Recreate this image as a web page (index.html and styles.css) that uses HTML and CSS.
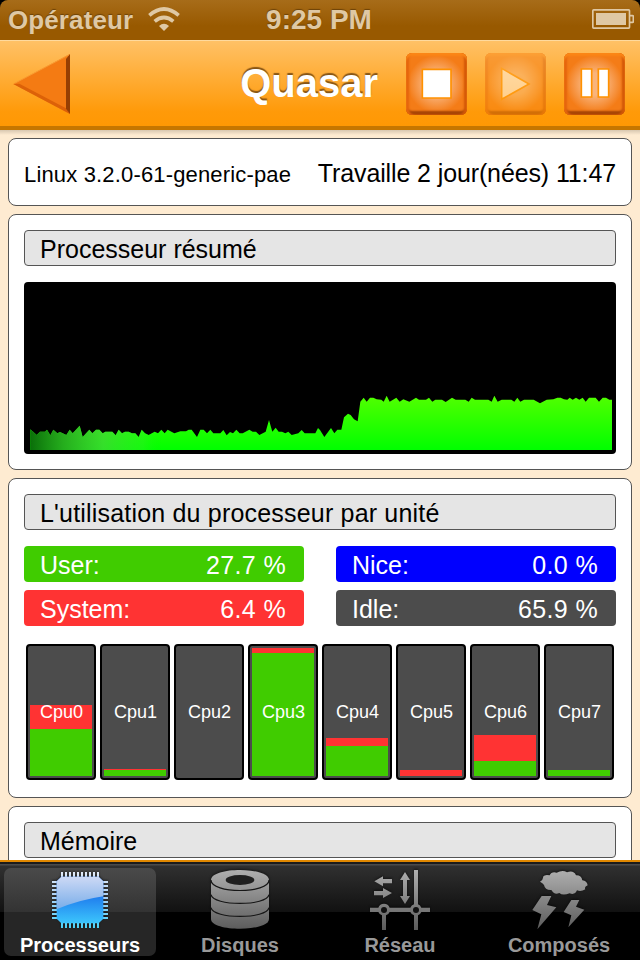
FILE: index.html
```html
<!DOCTYPE html>
<html lang="fr">
<head>
<meta charset="utf-8">
<title>Quasar</title>
<link rel="stylesheet" href="styles.css">
</head>
<body>
<div class="screen">
  <header class="status">
    <div class="carrier"><span>Opérateur</span>
      <svg class="wifi" viewBox="0 0 96 72"><g fill="none" stroke="#dfc8a4" stroke-width="11"><path d="M4 25Q48-13 92 25"/><path d="M20 43Q48 20 76 43"/></g><path fill="#dfc8a4" d="M33 57Q48 43 63 57L48 72Z"/></svg>
    </div>
    <span class="clock">9:25 PM</span>
    <svg class="battery" viewBox="0 0 126 60"><path d="M2.500 5q0-2.500 2.500-2.500h105q2.500 0 2.500 2.500v15h9q2.500 0 2.500 2.500v15q0 2.500-2.500 2.500h-9v15q0 2.500-2.500 2.500h-105q-2.500 0-2.500-2.500zM112.500 20v20" fill="none" stroke="#dfc8a4" stroke-width="5"/><path fill="#dfc8a4" d="M12 12h90v36H12z"/></svg>
  </header>
  <nav class="navbar">
    <svg class="back" viewBox="0 0 180 186">
      <path fill="#f47b13" d="M4 93 174 3V183Z"/><path fill="#dc6108" d="M4 93 174 183 162 166 22 92Z"/><path fill="#963f03" d="M174 3V183L162 167V18Z"/><path d="M8 91 172 5" stroke="#f99a31" stroke-width="3"/>
    </svg>
    <h1>Quasar</h1>
    <div class="controls">
      <div class="btn"><svg viewBox="0 0 183 186"><path d="M49 49h86v86H49z" fill="#fff" stroke="#ff9100" stroke-width="5"/></svg></div>
      <div class="btn off"><svg viewBox="0 0 183 186"><path d="M50 46V139L132 93Z" fill="#fff" stroke="#ff9100" stroke-width="5"/></svg></div>
      <div class="btn"><svg viewBox="0 0 183 186"><path d="M52 48h31v84H52zM103 48h31v84h-31z" fill="#fff" stroke="#ff9100" stroke-width="5"/></svg></div>
    </div>
  </nav>
  <main>
    <section class="card info"><span class="kernel">Linux 3.2.0-61-generic-pae</span><span class="uptime">Travaille 2 jour(nées) 11:47</span></section>
    <section class="card">
      <h2>Processeur résumé</h2>
      <svg class="chart" viewBox="72 -294 1776 516">
        <defs>
          <linearGradient id="load" gradientUnits="userSpaceOnUse" x1="0" y1="50" x2="0" y2="210"><stop stop-color="#50ff00"/><stop offset="1" stop-color="#0f0"/></linearGradient>
          <linearGradient id="fade" gradientUnits="userSpaceOnUse" x1="90" y1="0" x2="490" y2="0"><stop stop-color="#0a650a" stop-opacity=".94"/><stop offset=".25" stop-color="#2a9f22" stop-opacity=".85"/><stop offset=".55" stop-color="#48d13c" stop-opacity=".7"/><stop offset=".85" stop-color="#30ee25" stop-opacity=".45"/><stop offset="1" stop-color="#0f0" stop-opacity="0"/></linearGradient>
          <path id="past" d="M91 210V148L110 165 120 155 135 155 141 149 151 166 160 149 172 160 180 156 199 165 209 149 218 160 239 137 248 171 268 149 277 160 288 149 298 149 308 160 316 155 337 155 347 166 356 149 366 160 375 155 386 155 396 160 406 160 416 171 425 149 435 160 446 165 464 155 474 160 484 149 494 160 503 149 523 160 541 154 558 154 566 149 575 149 591 171 601 149 611 149 621 160 631 149 640 160 661 160 670 150 680 166 690 156 699 160 709 149 719 160 728 160 748 149 758 155 768 155 778 165 797 155 807 120 817 155 827 143 836 155 846 155 856 160 865 155 875 165 895 160 905 150 914 160 946 160 954 144 960 150V210Z"/>
        </defs>
        <use href="#past" fill="url(#load)"/><use href="#past" fill="url(#fade)"/>
        <path transform="translate(960)" fill="url(#load)" d="M0 210V150L13 171 33 144 43 160 52 149 64 149 72 112 84 101 92 105 102 118 113 124 121 65 131 53 140 65 150 53 160 53 170 58 184 59 191 65 200 47 209 65 229 53 239 65 250 58 268 65 288 53 297 59 318 59 327 53 337 65 346 59 366 59 377 66 396 53 407 59 436 59 446 65 455 53 465 59 505 59 515 65 523 47 533 65 545 59 574 59 583 65 592 53 601 65 612 59 641 59 660 70 680 59 700 58 712 53 722 53 732 58 742 59 749 53 758 59 768 53 778 59 788 53 797 65 807 53 827 53 837 65 848 53 858 53 868 59 876 59V210Z"/>
      </svg>
    </section>
    <section class="card">
      <h2 class="units">L'utilisation du processeur par unité</h2>
      <div class="stats">
        <div class="stat user"><span>User:</span><span class="value">27.7 %</span></div>
        <div class="stat nice"><span>Nice:</span><span class="value">0.0 %</span></div>
        <div class="stat system"><span>System:</span><span class="value">6.4 %</span></div>
        <div class="stat idle"><span>Idle:</span><span class="value">65.9 %</span></div>
      </div>
      <div class="cpus">
        <div class="cpu"><i class="s" style="height:24px"></i><i class="u" style="height:47px"></i><b>Cpu0</b></div>
        <div class="cpu"><i class="s" style="height:1px"></i><i class="u" style="height:6px"></i><b>Cpu1</b></div>
        <div class="cpu"><b>Cpu2</b></div>
        <div class="cpu"><i class="s" style="height:5px"></i><i class="u" style="height:123px"></i><b>Cpu3</b></div>
        <div class="cpu"><i class="s" style="height:8px"></i><i class="u" style="height:30px"></i><b>Cpu4</b></div>
        <div class="cpu"><i class="s" style="height:6px"></i><b>Cpu5</b></div>
        <div class="cpu"><i class="s" style="height:26px"></i><i class="u" style="height:15px"></i><b>Cpu6</b></div>
        <div class="cpu"><i class="u" style="height:6px"></i><b>Cpu7</b></div>
      </div>
    </section>
    <section class="card last"><h2>Mémoire</h2></section>
  </main>
  <footer class="tabs">
    <div class="tab on">
      <svg viewBox="144 204 192 192">
        <defs>
          <linearGradient id="pins" gradientUnits="userSpaceOnUse" x1="0" y1="216" x2="0" y2="384"><stop stop-color="#e3ecfa"/><stop offset=".45" stop-color="#a9d0f5"/><stop offset="1" stop-color="#4dd5fb"/></linearGradient>
          <linearGradient id="die" x1="0" y1="0" x2="0" y2="1"><stop offset=".35" stop-color="#1c74ec"/><stop offset="1" stop-color="#3cc6fc"/></linearGradient>
          <linearGradient id="shine" x1="0" y1="0" x2="0" y2="1"><stop stop-color="#cdd9f5"/><stop offset="1" stop-color="#78ade9"/></linearGradient>
        </defs>
        <path fill="none" stroke="url(#pins)" stroke-dasharray="6 6" stroke-width="18" d="M183 225L298 225.010M183 375L298 375.010M165 243L165.010 358M315 243L315.010 358"/>
        <path fill="url(#die)" d="M184 230H296L310 244V356L296 370H184L170 356V244Z"/>
        <path fill="url(#shine)" d="M184 230H296L310 244V289Q235 300 170 328V244Z"/>
      </svg><span>Processeurs</span>
    </div>
    <div class="tab">
      <svg viewBox="624 204 192 192">
        <defs><linearGradient id="gray" gradientUnits="userSpaceOnUse" x1="0" y1="208" x2="0" y2="390"><stop stop-color="#b0b0b0"/><stop offset="1" stop-color="#5b5b5b"/></linearGradient></defs>
        <path fill="url(#gray)" d="M633 240C633 200 807 200 807 240V357C807 396 633 396 633 357Z"/>
        <path fill="none" stroke="#161616" stroke-width="3.500" d="M633 240C633 282 807 282 807 240M633 284C639 319 801 319 807 284M633 323C639 358 801 358 807 323"/>
        <ellipse cx="720" cy="240" rx="43" ry="15" fill="#202020"/>
      </svg><span>Disques</span>
    </div>
    <div class="tab">
      <svg viewBox="144 204 192 192">
        <path fill="url(#gray)" d="M163 244 189 229V237H216V250H189V259ZM216 279 189 294V286H162V273H189V264ZM255 216 270 240H261V288H270L255 312 240 288H249V240H240ZM282 210H294V313A18 18 0 0 1 304 323H330V336H304A18 18 0 0 1 294 346V390H282V346A18 18 0 0 1 271 336H209A18 18 0 0 1 198 346V390H186V346A18 18 0 0 1 175 336H150V323H175A18 18 0 0 1 209 323H271A18 18 0 0 1 282 313Z"/><g fill="#101010"><circle cx="192" cy="330" r="9"/><circle cx="288" cy="330" r="9"/></g>
      </svg><span>Réseau</span>
    </div>
    <div class="tab">
      <svg viewBox="624 204 192 192">
        <path fill="url(#gray)" d="M660 245Q671 237 669 230Q675 222 689 226Q694 214 710 218Q728 208 741 217Q761 210 768 226Q784 225 787 241Q801 243 803 256Q792 260 796 268Q783 276 771 271Q765 286 749 280Q728 288 718 279Q703 286 694 270Q675 271 672 255Q668 249 660 245ZM665 288H694L681 315 709 322 652 388 664 343 637 330ZM754 300H778L768 320 793 329 745 382 754 346 731 336Z"/>
      </svg><span class="shift">Composés</span>
    </div>
  </footer>
</div>
</body>
</html>
```

FILE: styles.css
```css
* { box-sizing: border-box; }
body { margin: 0; background: #000; font-family: "Liberation Sans", Arial, sans-serif; overflow: hidden; }
.screen { width: 640px; height: 960px; display: flex; flex-direction: column; overflow: hidden; }
svg { display: block; }
.status { height: 40px; flex: none; display: grid; grid-template-columns: 1fr auto 1fr; align-items: start; padding: 0 6px 0 8px; border-radius: 8px 8px 0 0; background: linear-gradient(#a76c19, #985900 65%, #985900); color: #dfc8a4; font-weight: bold; text-shadow: 0 -1px 1px #6c4208; }
.carrier { display: flex; font-size: 26px; line-height: 40px; letter-spacing: .1px; gap: 15px; }
.wifi { width: 32px; height: 24px; margin-top: 7px; }
.clock { font-size: 28px; line-height: 39px; padding-right: 4px; }
.battery { width: 42px; height: 20px; margin-top: 9px; justify-self: end; }
.navbar { height: 90px; flex: none; display: flex; align-items: flex-start; padding: 12px 15px 0 12px; border-top: 1px solid #ffda9e; border-bottom: 4px solid #c67600; background: linear-gradient(#ffc166, #ff9a09 83%, #ff9804); }
.back { width: 60px; height: 62px; }
h1 { margin: 0 28px 0 auto; font-size: 40px; line-height: 60px; color: #fff; text-shadow: 0 -2px 1px #875515; }
.controls { display: flex; gap: 18px; }
.btn { width: 61px; height: 62px; border-radius: 6px; background: radial-gradient(circle, #f9b47c 25%, #f47c17 66%); box-shadow: inset 0 3px 2px #fb8616, inset 3px 0 2px #e4650d, inset -3px 0 2px #d25707, inset 0 -4px 2px #a54405; }
.btn.off { opacity: .5; }
.btn svg { width: 61px; height: 62px; }
main { flex: 1; min-height: 0; overflow: hidden; padding: 8px 8px 0; display: flex; flex-direction: column; gap: 8px; background: linear-gradient(#d8c7b0, #feebd1 5px); }
.card { flex: none; border: 1px solid #555; border-radius: 8px; background: #fff; padding: 15px; }
.info { height: 68px; display: flex; justify-content: space-between; padding: 0 15px; line-height: 69px; white-space: nowrap; }
.kernel { font-size: 22px; letter-spacing: .16px; padding-top: 1px; }
.uptime { font-size: 25px; letter-spacing: -.12px; }
h2 { margin: 0; height: 36px; border: 1px solid #555; border-radius: 4px; background: #e5e5e5; padding-left: 15px; font-weight: normal; font-size: 25px; line-height: 37px; color: #000; }
.units { letter-spacing: .19px; }
.chart { width: 592px; height: 172px; margin-top: 16px; border-radius: 4px; background: #000; }
.stats { display: grid; grid-template-columns: 1fr 1fr; gap: 8px 32px; margin-top: 16px; }
.stat { height: 36px; border-radius: 4px; padding: 0 18px 0 16px; display: flex; justify-content: space-between; font-size: 25px; line-height: 39px; color: #fff; }
.value { letter-spacing: .35px; }
.user { background: #40cc00; }
.nice { background: #00f; }
.system { background: #f33; }
.idle { background: #4c4c4c; }
.cpus { display: flex; gap: 4px; padding: 0 2px; margin: 18px 0 2px; }
.cpu { position: relative; width: 70px; height: 136px; border: 2px solid #000; border-radius: 4px; background: #4c4c4c; padding: 2px; display: flex; flex-direction: column; justify-content: flex-end; }
.cpu i { display: block; }
.cpu .s { background: #f33; }
.cpu .u { background: #40cc00; }
.cpu b { position: absolute; inset: 0; padding-left: 1px; font-weight: normal; font-size: 18px; line-height: 132px; text-align: center; color: #fff; }
.last { height: 200px; }
.tabs { height: 100px; flex: none; border-top: 2px solid #e18800; display: flex; padding: 6px 4px 4px; gap: 8px; background: linear-gradient(#1c1c1c 2px, #4b4b4b 2px, #4b4b4b 3px, #303030 4px, #111 50px, #000 50px); }
.tab { flex: 1; height: 88px; border-radius: 7px; display: flex; flex-direction: column; align-items: center; color: #999; font-weight: bold; font-size: 20px; line-height: 26px; }
.tab svg { width: 64px; height: 64px; flex: none; filter: drop-shadow(0 -1px 1px rgba(0,0,0,.5)); }
.tab.on { background: linear-gradient(#4a4a4a, #333 44px, #262626 44px); color: #fff; }
.shift { margin-right: 2px; }
```
